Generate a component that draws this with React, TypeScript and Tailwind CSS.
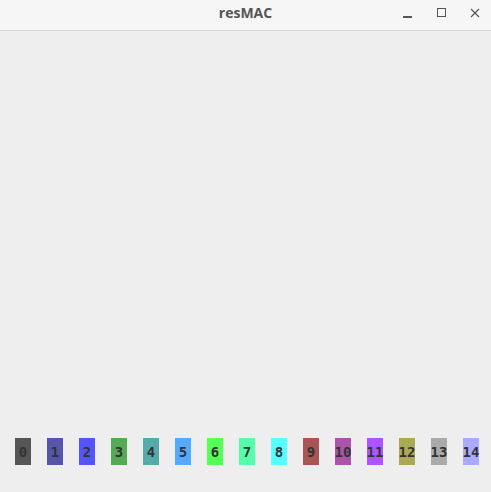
import React from "react";

const colors = [
  "#555555", "#5555aa", "#5555ff", "#55aa55", "#55aaaa",
  "#55aaff", "#55ff55", "#55ffaa", "#55ffff", "#aa5555",
  "#aa55aa", "#aa55ff", "#aaaa55", "#aaaaaa", "#aaaaff",
];

export default function App() {
  return (
    <div className="flex h-[492px] w-[491px] flex-col overflow-hidden bg-[#eeeeee]">
      {/* Title bar */}
      <div className="relative flex h-[31px] shrink-0 items-center justify-center border-b border-[#d8d8d8] bg-[#f6f6f6] pb-[5px]">
        <span className="text-[14px] font-bold text-[#555555] [font-family:'Open_Sans',sans-serif]">resMAC</span>
        <div className="absolute right-0 top-0 flex h-full items-center pb-[5px]">
          <div className="flex w-[33px] justify-center">
            <div className="mt-[9px] h-[1.5px] w-[9px] bg-[#555555]" />
          </div>
          <div className="flex w-[34px] justify-center">
            <div className="h-[9px] w-[9px] border border-[#555555]" />
          </div>
          <div className="flex w-[33px] justify-center">
            <svg width="10" height="10" viewBox="0 0 10 10" stroke="#555555" strokeWidth="1.2">
              <path d="M1 1 L9 9 M9 1 L1 9" />
            </svg>
          </div>
        </div>
      </div>

      {/* Palette */}
      <div className="flex flex-1 flex-col justify-end pb-[27px]">
        <div className="flex gap-[16px] pl-[15px]">
          {colors.map((c, i) => (
            <div
              key={i}
              className="flex h-[27px] w-[16px] shrink-0 items-center justify-center overflow-visible"
              style={{ backgroundColor: c }}
            >
              <span className="whitespace-nowrap text-[14px] font-bold leading-none text-[#333333] [font-family:'DejaVu_Sans_Mono',monospace]">{i}</span>
            </div>
          ))}
        </div>
      </div>
    </div>
  );
}
